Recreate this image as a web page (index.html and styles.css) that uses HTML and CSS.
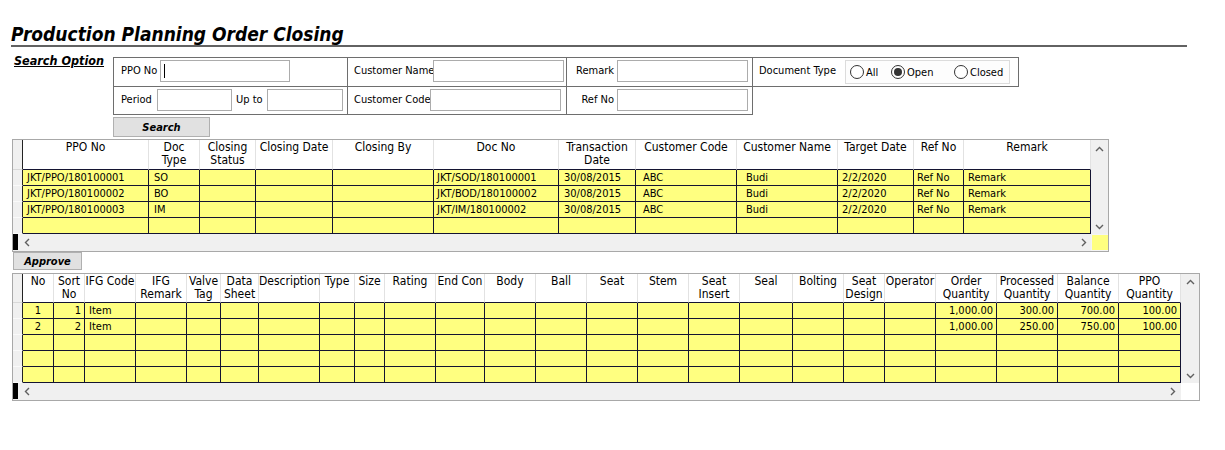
FILE: index.html
```html
<!DOCTYPE html>
<html>
<head>
<meta charset="utf-8">
<title>Production Planning Order Closing</title>
<link rel="stylesheet" href="styles.css">
</head>
<body>
<h1 class="title">Production Planning Order Closing</h1>

<div class="search-row">
  <div class="search-label">Search Option</div>
  <div class="sbox-wrap">
    <div class="sbox">
      <div class="scell c1 r1"><span class="lbl w39">PPO No</span><div class="inp w130"><span class="caret"></span></div></div>
      <div class="scell c2 r1"><span class="lbl w79">Customer Name</span><div class="inp w131"></div></div>
      <div class="scell c3 r1"><span class="lbl lr">Remark</span><div class="inp w131"></div></div>
      <div class="scell c1"><span class="lbl w36">Period</span><div class="inp w75"></div><span class="lbl upto">Up to</span><div class="inp w76"></div></div>
      <div class="scell c2"><span class="lbl w76">Customer Code</span><div class="inp w131"></div></div>
      <div class="scell c3"><span class="lbl lr">Ref No</span><div class="inp w131"></div></div>
    </div>
    <div class="dtype">
      <span class="lbl w86">Document Type</span>
      <div class="rgroup">
        <div class="ritem ri1"><span class="radio"></span><span>All</span></div>
        <div class="ritem ri2"><span class="radio on"></span><span>Open</span></div>
        <div class="ritem"><span class="radio"></span><span>Closed</span></div>
      </div>
    </div>
  </div>
</div>

<div class="btn search-btn">Search</div>

<div class="grid tg">
  <div class="gmain">
    <div class="cols">
      <div class="row hrow">
        <div class="rh"></div>
        <div>PPO No</div>
        <div>Doc<br>Type</div>
        <div>Closing<br>Status</div>
        <div>Closing Date</div>
        <div>Closing By</div>
        <div>Doc No</div>
        <div>Transaction<br>Date</div>
        <div>Customer Code</div>
        <div>Customer Name</div>
        <div>Target Date</div>
        <div>Ref No</div>
        <div>Remark</div>
      </div>
      <div class="row drow">
        <div class="rh"></div>
        <div>JKT/PPO/180100001</div>
        <div>SO</div>
        <div></div>
        <div></div>
        <div></div>
        <div>JKT/SOD/180100001</div>
        <div>30/08/2015</div>
        <div>ABC</div>
        <div>Budi</div>
        <div>2/2/2020</div>
        <div>Ref No</div>
        <div>Remark</div>
      </div>
      <div class="row drow">
        <div class="rh"></div>
        <div>JKT/PPO/180100002</div>
        <div>BO</div>
        <div></div>
        <div></div>
        <div></div>
        <div>JKT/BOD/180100002</div>
        <div>30/08/2015</div>
        <div>ABC</div>
        <div>Budi</div>
        <div>2/2/2020</div>
        <div>Ref No</div>
        <div>Remark</div>
      </div>
      <div class="row drow">
        <div class="rh"></div>
        <div>JKT/PPO/180100003</div>
        <div>IM</div>
        <div></div>
        <div></div>
        <div></div>
        <div>JKT/IM/180100002</div>
        <div>30/08/2015</div>
        <div>ABC</div>
        <div>Budi</div>
        <div>2/2/2020</div>
        <div>Ref No</div>
        <div>Remark</div>
      </div>
      <div class="row drow">
        <div class="rh"></div>
        <div></div><div></div><div></div><div></div><div></div><div></div>
        <div></div><div></div><div></div><div></div><div></div><div></div>
      </div>
    </div>
    <div class="vscroll">
      <svg width="9" height="6" viewBox="0 0 9 6"><path d="M1 5 L4.5 1.5 L8 5" fill="none" stroke="#606060" stroke-width="1.4"/></svg>
      <svg width="9" height="6" viewBox="0 0 9 6"><path d="M1 1 L4.5 4.5 L8 1" fill="none" stroke="#606060" stroke-width="1.4"/></svg>
    </div>
  </div>
  <div class="hscroll">
    <div class="hs-track">
      <span class="hbar"></span>
      <svg class="al" width="6" height="9" viewBox="0 0 6 9"><path d="M5 1 L1.5 4.5 L5 8" fill="none" stroke="#606060" stroke-width="1.4"/></svg>
      <span class="spacer"></span>
      <svg class="ar" width="6" height="9" viewBox="0 0 6 9"><path d="M1 1 L4.5 4.5 L1 8" fill="none" stroke="#606060" stroke-width="1.4"/></svg>
    </div>
    <div class="corner"><span class="corner-fill"></span></div>
  </div>
</div>

<div class="btn approve-btn">Approve</div>

<div class="grid bg">
  <div class="gmain">
    <div class="cols">
      <div class="row hrow">
        <div class="rh"></div>
        <div>No</div>
        <div>Sort<br>No</div>
        <div>IFG Code</div>
        <div>IFG<br>Remark</div>
        <div>Valve<br>Tag</div>
        <div>Data<br>Sheet</div>
        <div>Description</div>
        <div>Type</div>
        <div>Size</div>
        <div>Rating</div>
        <div>End Con</div>
        <div>Body</div>
        <div>Ball</div>
        <div>Seat</div>
        <div>Stem</div>
        <div>Seat<br>Insert</div>
        <div>Seal</div>
        <div>Bolting</div>
        <div>Seat<br>Design</div>
        <div>Operator</div>
        <div>Order<br>Quantity</div>
        <div>Processed<br>Quantity</div>
        <div>Balance<br>Quantity</div>
        <div>PPO<br>Quantity</div>
      </div>
      <div class="row drow">
        <div class="rh"></div>
        <div class="ctr">1</div>
        <div class="num">1</div>
        <div>Item</div>
        <div></div><div></div><div></div><div></div><div></div><div></div><div></div><div></div><div></div>
        <div></div><div></div><div></div><div></div><div></div><div></div><div></div><div></div>
        <div class="num">1,000.00</div>
        <div class="num">300.00</div>
        <div class="num">700.00</div>
        <div class="num">100.00</div>
      </div>
      <div class="row drow">
        <div class="rh"></div>
        <div class="ctr">2</div>
        <div class="num">2</div>
        <div>Item</div>
        <div></div><div></div><div></div><div></div><div></div><div></div><div></div><div></div><div></div>
        <div></div><div></div><div></div><div></div><div></div><div></div><div></div><div></div>
        <div class="num">1,000.00</div>
        <div class="num">250.00</div>
        <div class="num">750.00</div>
        <div class="num">100.00</div>
      </div>
      <div class="row drow">
        <div class="rh"></div>
        <div></div><div></div><div></div><div></div><div></div><div></div><div></div><div></div>
        <div></div><div></div><div></div><div></div><div></div><div></div><div></div><div></div>
        <div></div><div></div><div></div><div></div><div></div><div></div><div></div><div></div>
      </div>
      <div class="row drow">
        <div class="rh"></div>
        <div></div><div></div><div></div><div></div><div></div><div></div><div></div><div></div>
        <div></div><div></div><div></div><div></div><div></div><div></div><div></div><div></div>
        <div></div><div></div><div></div><div></div><div></div><div></div><div></div><div></div>
      </div>
      <div class="row drow">
        <div class="rh"></div>
        <div></div><div></div><div></div><div></div><div></div><div></div><div></div><div></div>
        <div></div><div></div><div></div><div></div><div></div><div></div><div></div><div></div>
        <div></div><div></div><div></div><div></div><div></div><div></div><div></div><div></div>
      </div>
    </div>
    <div class="vscroll">
      <svg width="9" height="6" viewBox="0 0 9 6"><path d="M1 5 L4.5 1.5 L8 5" fill="none" stroke="#606060" stroke-width="1.4"/></svg>
      <svg width="9" height="6" viewBox="0 0 9 6"><path d="M1 1 L4.5 4.5 L8 1" fill="none" stroke="#606060" stroke-width="1.4"/></svg>
    </div>
  </div>
  <div class="hscroll">
    <div class="hs-track">
      <span class="hbar"></span>
      <svg class="al" width="6" height="9" viewBox="0 0 6 9"><path d="M5 1 L1.5 4.5 L5 8" fill="none" stroke="#606060" stroke-width="1.4"/></svg>
      <span class="spacer"></span>
      <svg class="ar" width="6" height="9" viewBox="0 0 6 9"><path d="M1 1 L4.5 4.5 L1 8" fill="none" stroke="#606060" stroke-width="1.4"/></svg>
    </div>
    <div class="corner"></div>
  </div>
</div>
</body>
</html>
```

FILE: styles.css
```css
html, body {
  margin: 0;
  padding: 0;
  background: #ffffff;
}

body {
  font-family: "DejaVu Sans Condensed", "DejaVu Sans", sans-serif;
  color: #000000;
}

.title {
  margin: 23px 0 0 11px;
  width: 1176px;
  height: 22px;
  font-size: 19px;
  line-height: 22px;
  font-weight: bold;
  font-style: italic;
  white-space: nowrap;
  border-bottom: 2px solid #626262;
}

/* ---------- search section ---------- */
.search-row {
  display: flex;
  margin-top: 7px;
  padding-left: 14px;
}

.search-label {
  width: 99px;
  font-size: 12.5px;
  line-height: 14px;
  font-weight: bold;
  font-style: italic;
  text-decoration: underline;
  white-space: nowrap;
}

.sbox-wrap {
  display: flex;
  align-items: flex-start;
  margin-top: 3px;
}

.sbox {
  display: grid;
  grid-template-columns: 234px 219px 185px;
  grid-template-rows: 29px 27px;
  border: 1px solid #6e6e6e;
}

.scell {
  box-sizing: border-box;
  display: flex;
  align-items: flex-start;
  padding-top: 2px;
  font-size: 11px;
}

.scell.r1 { border-bottom: 1px solid #6e6e6e; }
.scell.c1 { border-right: 1px solid #6e6e6e; padding-left: 7px; }
.scell.c2 { border-right: 1px solid #6e6e6e; padding-left: 6px; }

.lbl {
  display: inline-block;
  height: 22px;
  line-height: 22px;
  white-space: nowrap;
}

.w36 { width: 36px; }
.w39 { width: 39px; }
.w76 { width: 76px; }
.w79 { width: 79px; }
.w86 { width: 86px; }
.upto { width: 31px; margin-left: 4px; }
.lr { width: 47px; margin-right: 3px; text-align: right; }

.inp {
  box-sizing: border-box;
  height: 22px;
  border: 1px solid #acacac;
  background: #ffffff;
  display: flex;
  align-items: center;
}

.w75 { width: 75px; }
.w76.inp { width: 76px; }
.w130 { width: 130px; }
.w131 { width: 131px; }

.caret {
  display: block;
  width: 1px;
  height: 14px;
  margin-left: 3px;
  background: #000;
}

.dtype {
  box-sizing: border-box;
  width: 266px;
  height: 30px;
  border: 1px solid #6e6e6e;
  border-left: none;
  display: flex;
  align-items: flex-start;
  padding: 2px 0 0 6px;
  font-size: 11px;
}

.rgroup {
  box-sizing: border-box;
  width: 165px;
  height: 24px;
  border: 1px solid #dcdcdc;
  background: #fdfdfd;
  display: flex;
  align-items: center;
  padding-left: 4px;
}

.ritem {
  display: flex;
  align-items: center;
  gap: 2px;
}
.ri1 { width: 41px; }
.ri2 { width: 63px; }

.radio {
  box-sizing: border-box;
  width: 14px;
  height: 14px;
  border: 1px solid #333333;
  border-radius: 50%;
  background: #ffffff;
  display: flex;
  align-items: center;
  justify-content: center;
}

.radio.on::after {
  content: "";
  width: 8px;
  height: 8px;
  border-radius: 50%;
  background: #333333;
}

/* ---------- buttons ---------- */
.btn {
  box-sizing: border-box;
  display: flex;
  align-items: center;
  justify-content: center;
  background: #e1e1e1;
  border: 1px solid #b0b0b0;
  font-weight: bold;
  font-style: italic;
  font-size: 11px;
}

.search-btn {
  margin: 2px 0 0 113px;
  width: 97px;
  height: 20px;
}

.approve-btn {
  margin: 0 0 0 13px;
  width: 69px;
  height: 18px;
}

/* ---------- grids ---------- */
.grid {
  display: flex;
  flex-direction: column;
  width: max-content;
  margin-left: 12px;
  border: 1px solid #a8a8a8;
}

.tg { margin-top: 2px; }
.bg { margin-top: 3px; }

.gmain { display: flex; }

.row { display: grid; }

.tg .row {
  grid-template-columns: 10px 126px 51px 56px 77px 101px 125px 77px 101px 101px 76px 50px 127px;
}

.bg .row {
  grid-template-columns: 10px 31px 31px 51px 51px 34px 38px 61px 35px 30px 51px 49px 51px 51px 51px 51px 51px 53px 51px 41px 51px 61px 61px 61px 62px;
}

.hrow { height: 30px; }
.bg .hrow { height: 29px; }

.hrow > div {
  box-sizing: border-box;
  background: #ffffff;
  border-right: 1px solid #e2e2e2;
  border-bottom: 1px solid #141432;
  text-align: center;
  font-size: 12px;
  line-height: 13px;
  padding-top: 1px;
  white-space: nowrap;
}

.hrow > .rh {
  background: #f0f0f0;
  border-right-color: #222222;
  border-bottom-color: #d8d8d8;
}

.drow { height: 16px; }

.drow > div {
  box-sizing: border-box;
  background: #ffff80;
  border-right: 1px solid #141432;
  border-bottom: 1px solid #141432;
  font-size: 11px;
  line-height: 15px;
  padding-left: 3px;
  white-space: nowrap;
  overflow: hidden;
}

.drow > .rh {
  background: #f0f0f0;
  border-right-color: #222222;
  border-bottom-color: #fafafa;
  padding: 0;
}

.tg .drow > :nth-child(2) { padding-left: 4px; }
.tg .drow > :nth-child(3) { padding-left: 5px; }
.tg .drow > :nth-child(8) { padding-left: 5px; }
.tg .drow > :nth-child(9) { padding-left: 7px; }
.tg .drow > :nth-child(10) { padding-left: 9px; }
.tg .drow > :nth-child(11) { padding-left: 4px; }
.tg .drow > :nth-child(13) { padding-left: 4px; }

.bg .drow > :nth-child(4) { padding-left: 4px; }

.drow > .ctr { text-align: center; padding: 0; }
.drow > .num { text-align: right; padding: 0 3px 0 0; }

.vscroll {
  box-sizing: border-box;
  width: 17px;
  background: #f0f0f0;
  display: flex;
  flex-direction: column;
  align-items: center;
  justify-content: space-between;
  padding: 6px 0 4px;
}

.bg .vscroll {
  width: 18px;
  padding: 5px 0 4px;
}

.vscroll svg { display: block; }

.hscroll {
  display: flex;
  height: 17px;
}

.hs-track {
  display: flex;
  align-items: center;
  background: #f0f0f0;
}

.tg .hs-track { width: 1078px; }
.bg .hs-track { width: 1168px; }

.hbar {
  align-self: flex-start;
  width: 5px;
  height: 16px;
  background: #000000;
}

.al { display: block; margin-left: 6px; }
.spacer { flex: 1; }
.ar { display: block; }
.tg .ar { margin-right: 4px; }
.bg .ar { margin-right: 5px; }

.corner {
  box-sizing: border-box;
  width: 17px;
  background: #f4f4f4;
  padding: 1px 0 1px 1px;
  display: flex;
}

.bg .corner {
  width: 18px;
  background: #ffffff;
}

.corner-fill {
  flex: 1;
  background: #ffff80;
}
```
